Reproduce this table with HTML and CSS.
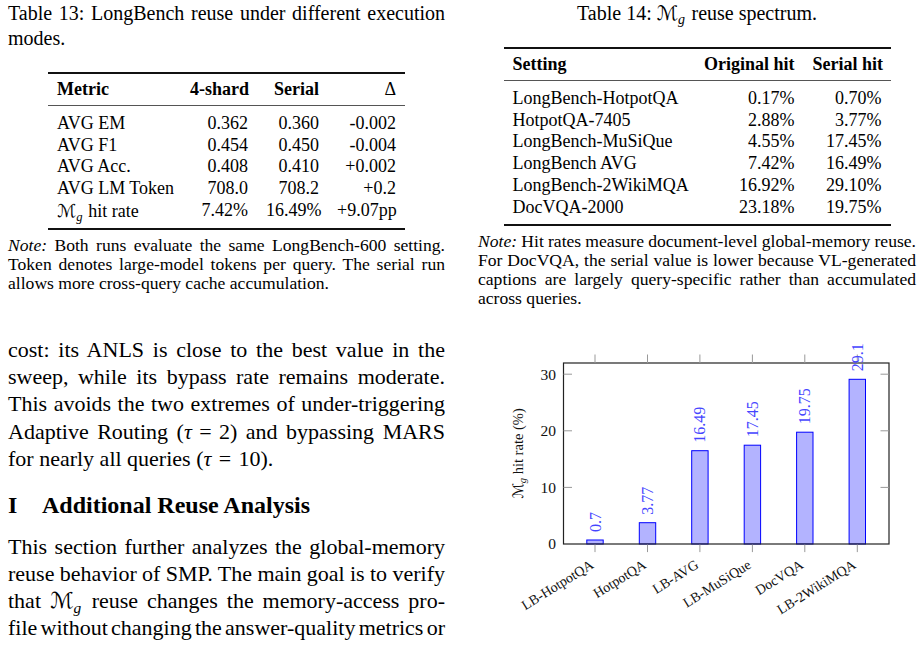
FILE: index.html
```html
<!DOCTYPE html>
<html>
<head>
<meta charset="utf-8">
<link rel="stylesheet" href="styles.css">
</head>
<body>
<div class="page">
  <div class="col">
    <p class="caption">
      <span class="ln">Table 13: LongBench reuse under different execution</span>
      <span class="ln ln-end">modes.</span>
    </p>
    <table class="tbl t13">
      <colgroup><col class="w133"><col class="w76"><col class="w71"><col class="w77"></colgroup>
      <thead>
        <tr><th class="l">Metric</th><th class="r">4-shard</th><th class="r">Serial</th><th class="r delta">Δ</th></tr>
      </thead>
      <tbody>
        <tr><td class="l">AVG EM</td><td class="r">0.362</td><td class="r">0.360</td><td class="r">-0.002</td></tr>
        <tr><td class="l">AVG F1</td><td class="r">0.454</td><td class="r">0.450</td><td class="r">-0.004</td></tr>
        <tr><td class="l">AVG Acc.</td><td class="r">0.408</td><td class="r">0.410</td><td class="r">+0.002</td></tr>
        <tr><td class="l">AVG LM Token</td><td class="r">708.0</td><td class="r">708.2</td><td class="r">+0.2</td></tr>
        <tr><td class="l"><span class="cal">ℳ</span><sub class="sub">g</sub> hit rate</td><td class="r">7.42%</td><td class="r">16.49%</td><td class="r">+9.07pp</td></tr>
      </tbody>
    </table>
    <p class="note">
      <span class="ln"><em>Note:</em> Both runs evaluate the same LongBench-600 setting.</span>
      <span class="ln">Token denotes large-model tokens per query. The serial run</span>
      <span class="ln ln-end">allows more cross-query cache accumulation.</span>
    </p>
    <p class="body first">
      <span class="ln">cost: its ANLS is close to the best value in the</span>
      <span class="ln">sweep, while its bypass rate remains moderate.</span>
      <span class="ln">This avoids the two extremes of under-triggering</span>
      <span class="ln">Adaptive Routing (<span class="m"><i>τ</i>&#8196;=&#8196;2</span>) and bypassing MARS</span>
      <span class="ln ln-end">for nearly all queries (<span class="m"><i>τ</i>&#8196;=&#8196;10</span>).</span>
    </p>
    <h2 class="section"><span class="secnum">I</span>Additional Reuse Analysis</h2>
    <p class="body">
      <span class="ln">This section further analyzes the global-memory</span>
      <span class="ln">reuse behavior of SMP. The main goal is to verify</span>
      <span class="ln">that <span class="cal">ℳ</span><sub class="sub">g</sub> reuse changes the memory-access pro-</span>
      <span class="ln">file without changing the answer-quality metrics or</span>
    </p>
  </div>
  <div class="col">
    <p class="caption caption-center">Table 14: <span class="cal">ℳ</span><sub class="sub">g</sub> reuse spectrum.</p>
    <table class="tbl t14">
      <colgroup><col class="w190"><col class="w110"><col class="w87"></colgroup>
      <thead>
        <tr><th class="l">Setting</th><th class="r">Original hit</th><th class="r">Serial hit</th></tr>
      </thead>
      <tbody>
        <tr><td class="l">LongBench-HotpotQA</td><td class="r">0.17%</td><td class="r">0.70%</td></tr>
        <tr><td class="l">HotpotQA-7405</td><td class="r">2.88%</td><td class="r">3.77%</td></tr>
        <tr><td class="l">LongBench-MuSiQue</td><td class="r">4.55%</td><td class="r">17.45%</td></tr>
        <tr><td class="l">LongBench AVG</td><td class="r">7.42%</td><td class="r">16.49%</td></tr>
        <tr><td class="l">LongBench-2WikiMQA</td><td class="r">16.92%</td><td class="r">29.10%</td></tr>
        <tr><td class="l">DocVQA-2000</td><td class="r">23.18%</td><td class="r">19.75%</td></tr>
      </tbody>
    </table>
    <p class="note">
      <span class="ln"><em>Note:</em> Hit rates measure document-level global-memory reuse.</span>
      <span class="ln">For DocVQA, the serial value is lower because VL-generated</span>
      <span class="ln">captions are largely query-specific rather than accumulated</span>
      <span class="ln ln-end">across queries.</span>
    </p>
    <svg class="chart" viewBox="478 330 438 318" width="438" height="318" xmlns="http://www.w3.org/2000/svg">
      <g class="bars">
        <rect x="586.8" y="542.0" width="16.4" height="4.0"/>
        <rect x="639.3" y="524.7" width="16.4" height="21.3"/>
        <rect x="691.7" y="452.7" width="16.4" height="93.3"/>
        <rect x="744.2" y="447.2" width="16.4" height="98.8"/>
        <rect x="796.6" y="434.2" width="16.4" height="111.8"/>
        <rect x="849.1" y="381.3" width="16.4" height="164.7"/>
      </g>
      <rect class="frame" x="563.5" y="365" width="325.5" height="181"/>
      <path class="ticks" d="M563.5 376.2h8.5M563.5 432.8h8.5M563.5 489.4h8.5M889 376.2h-8.5M889 432.8h-8.5M889 489.4h-8.5M595 356.5v8.5M647.5 356.5v8.5M699.9 356.5v8.5M752.4 356.5v8.5M804.8 356.5v8.5M857.3 356.5v8.5M595 546.6v7.5M647.5 546.6v7.5M699.9 546.6v7.5M752.4 546.6v7.5M804.8 546.6v7.5M857.3 546.6v7.5"/>
      <g class="ylab">
        <text x="556" y="381.5">30</text>
        <text x="556" y="438">20</text>
        <text x="556" y="494.6">10</text>
        <text x="556" y="551.2">0</text>
      </g>
      <g class="vals">
        <text transform="translate(600.5 534) rotate(-90)">0.7</text>
        <text transform="translate(653 516.7) rotate(-90)">3.77</text>
        <text transform="translate(705.4 444.7) rotate(-90)">16.49</text>
        <text transform="translate(757.9 439.2) rotate(-90)">17.45</text>
        <text transform="translate(810.3 426.2) rotate(-90)">19.75</text>
        <text transform="translate(862.8 373.3) rotate(-90)">29.1</text>
      </g>
      <g class="xlab">
        <text transform="translate(592 565) rotate(-32)" dy="0.35em">LB-HotpotQA</text>
        <text transform="translate(644.5 565) rotate(-32)" dy="0.35em">HotpotQA</text>
        <text transform="translate(696.9 565) rotate(-32)" dy="0.35em">LB-AVG</text>
        <text transform="translate(749.4 565) rotate(-32)" dy="0.35em">LB-MuSiQue</text>
        <text transform="translate(801.8 565) rotate(-32)" dy="0.35em">DocVQA</text>
        <text transform="translate(854.3 565) rotate(-32)" dy="0.35em">LB-2WikiMQA</text>
      </g>
      <text class="yaxis" transform="translate(522.5 455.5) rotate(-90)"><tspan class="calsvg">ℳ</tspan><tspan class="subsvg" dy="3">g</tspan><tspan dy="-3"> hit rate (%)</tspan></text>
    </svg>
  </div>
</div>
</body>
</html>
```

FILE: styles.css
```css
* { box-sizing: border-box; }

body {
  margin: 0;
  background: #fff;
  color: #000;
  font-family: "Liberation Serif", "Times New Roman", serif;
}

.page {
  display: grid;
  grid-template-columns: 437px 438px;
  column-gap: 33px;
  padding: 1px 0 0 8px;
}

.col { min-width: 0; }

.ln {
  display: block;
  text-align: justify;
  text-align-last: justify;
  word-spacing: -2.5px;
}
.ln-end {
  text-align-last: left;
  word-spacing: normal;
}

.caption {
  font-size: 20px;
  line-height: 25px;
  margin: 0 0 20.5px;
}
.caption-center { text-align: center; }

.cal {
  font-family: "DejaVu Serif", "DejaVu Sans", serif;
  font-style: normal;
}
.sub {
  font-style: italic;
  font-size: 0.7em;
  vertical-align: -0.3em;
  line-height: 0;
  margin-right: 0.1em;
}
.m { white-space: nowrap; word-spacing: normal; }

.tbl {
  border-collapse: separate;
  border-spacing: 0;
  border-top: 2px solid #111;
  border-bottom: 2px solid #111;
  margin: 0 auto;
  font-size: 18px;
  table-layout: fixed;
}
.t13 { width: 357px; }
.t14 { width: 387px; }
.w133 { width: 133px; }
.w76 { width: 76px; }
.w71 { width: 71px; }
.w77 { width: 77px; }
.w190 { width: 190px; }
.w110 { width: 110px; }
.w87 { width: 87px; }

.tbl th {
  font-weight: bold;
  line-height: 31px;
  padding: 0 9px;
  border-bottom: 1px solid #555;
  white-space: nowrap;
}
.tbl th.delta { font-weight: normal; }
.tbl td {
  line-height: 21.7px;
  padding: 0 9px;
  white-space: nowrap;
}
.tbl tbody tr:first-child td { padding-top: 7.5px; }
.tbl tbody tr:last-child td { padding-bottom: 5.4px; }
.l { text-align: left; }
.r { text-align: right; }

.note {
  font-size: 17.6px;
  line-height: 19px;
  margin: 6px 0 0;
}

.body {
  font-size: 22px;
  line-height: 27.2px;
  margin: 0;
}
.body.first { margin-top: 43px; }

.section {
  font-size: 24px;
  line-height: 28px;
  font-weight: bold;
  margin: 19.3px 0 13.3px;
}
.secnum {
  display: inline-block;
  width: 34px;
}

.chart {
  display: block;
  margin-top: 20.5px;
  overflow: visible;
}
.chart text { font-family: "Liberation Serif", "Times New Roman", serif; }
.bars rect {
  fill: #b3b3ff;
  stroke: #0000ff;
  stroke-width: 1;
}
.frame {
  fill: none;
  stroke: #222;
  stroke-width: 1.2;
}
.ticks {
  stroke: #999;
  stroke-width: 1;
  fill: none;
}
.ylab text {
  font-size: 15.5px;
  text-anchor: end;
  fill: #111;
}
.vals text {
  font-size: 16px;
  fill: #4545ff;
}
.xlab text {
  font-size: 14px;
  text-anchor: end;
  fill: #111;
}
.yaxis {
  font-size: 14.5px;
  text-anchor: middle;
  fill: #111;
}
.calsvg { font-family: "DejaVu Serif", "DejaVu Sans", serif; }
.subsvg { font-style: italic; font-size: 10.5px; }
```
